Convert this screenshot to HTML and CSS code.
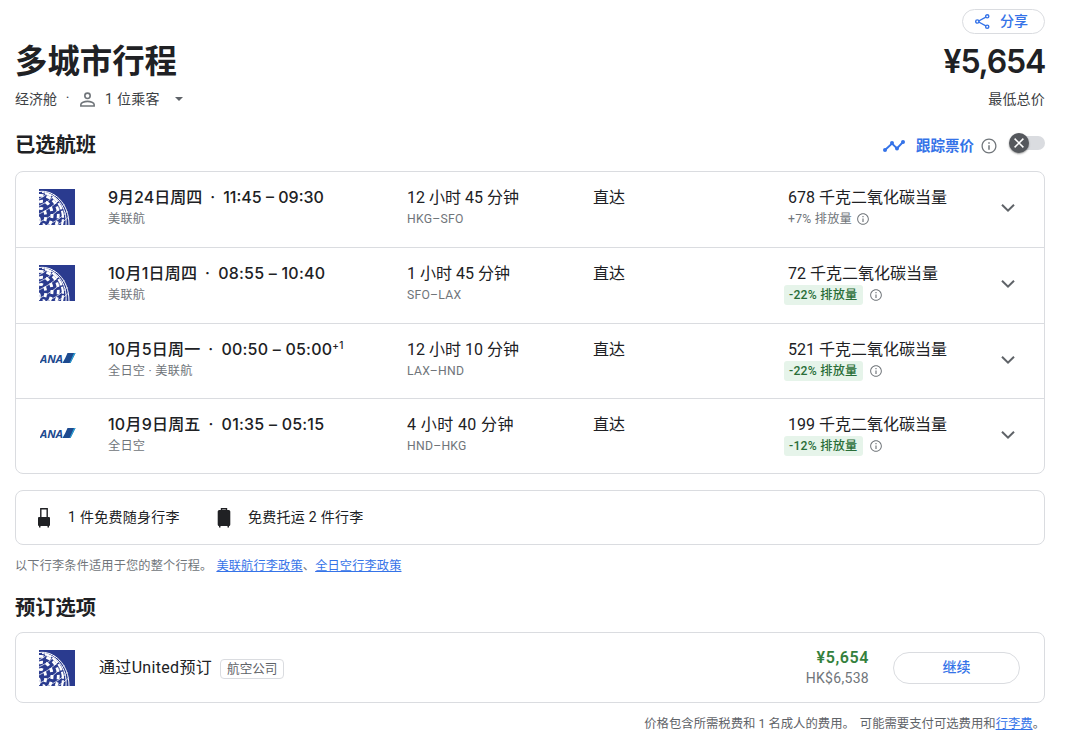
FILE: index.html
```
<!DOCTYPE html>
<html lang="zh-CN">
<head>
    <meta charset="UTF-8">
    <meta name="viewport" content="width=device-width, initial-scale=1.0">
    <title>多城市行程</title>
    <link rel="stylesheet" href="styles.css">
</head>
<body>
    <!-- Shared icons -->
    <svg class="sprite">
        <symbol id="united" viewBox="0 0 36 36">
            <rect width="36" height="36" fill="#2a3b8f"/>
            <!-- meridians -->
            <g fill="none" stroke="#fff">
                <path d="M0 2.500C15 .5 30 14 30 36" stroke-width="1"/>
                <path d="M3 3.500C17 4 28.500 18 27 36" stroke-width="1"/>
                <path d="M6 4C18 8 27 21 23 36" stroke-width="2.200" stroke-dasharray="7 1.500"/>
                <path d="M0 6.500C14 5 24 20 17 36" stroke-width="2.800" stroke-dasharray="4.500 3"/>
                <path d="M0 13C10 9 17 23 10.500 36" stroke-width="3" stroke-dasharray="4 3"/>
                <path d="M0 20C6 17 9 27 4.500 36" stroke-width="2.800" stroke-dasharray="4 2.500"/>
                <path d="M0 28Q2 30 0 35" stroke-width="1.600"/>
            </g>
            <!-- parallels -->
            <path d="M0 10Q5 8 9 3.500M0 17Q10 13 16 6M0 25Q13 19 21 10M1 33Q17 25 25.500 15M8 36Q21 31 28.500 22M18 36Q25 33 29.500 28" fill="none" stroke="#fff" stroke-width=".7"/>
        </symbol>
        <symbol id="ana" viewBox="0 0 36 12">
            <text class="ana-text" x="0" y="10.500" textLength="23" lengthAdjust="spacingAndGlyphs">ANA</text>
            <path d="M27.500 1H35.500L30.500 11H22.500Q25.500 6 27.500 1Z" fill="#1d4a8f"/>
            <path d="M34 1H35.500L30.500 11H29.500Z" fill="#2ba5d8"/>
        </symbol>
        <symbol id="info" viewBox="0 0 24 24">
            <path d="M11 7h2v2h-2zm0 4h2v6h-2zm1-9C6.480 2 2 6.480 2 12s4.480 10 10 10 10-4.480 10-10S17.520 2 12 2zm0 18.300c-4.580 0-8.300-3.720-8.300-8.300S7.420 3.700 12 3.700s8.300 3.720 8.300 8.300-3.720 8.300-8.300 8.300z"/>
        </symbol>
        <symbol id="chevron" viewBox="0 0 24 24">
            <path d="M6.700 8.100L12 13.200l5.300-5.100L18.700 9.500 12 16.100 5.300 9.500z"/>
        </symbol>
    </svg>

    <main class="page">
        <div class="share-bar">
            <button class="share-btn">
                <svg class="share-icon" viewBox="0 0 18 18"><g fill="none" stroke="currentColor" stroke-width="1.500"><path d="M4 9L14 3.500M4 9L14 14.500"/><circle cx="3.500" cy="9" r="1.700" fill="#fff"/><circle cx="14" cy="3.500" r="1.700" fill="#fff"/><circle cx="14" cy="14.500" r="1.700" fill="#fff"/></g></svg>
                <span>分享</span>
            </button>
        </div>

        <header class="trip-title">
            <h1>多城市行程</h1>
            <div class="total-price">¥5,654</div>
        </header>
        <div class="trip-meta">
            <span>经济舱</span>
            <span class="meta-dot">·</span>
            <svg class="person-icon" viewBox="0 0 14 14"><g fill="none" stroke="#70757a" stroke-width="1.500"><circle cx="7" cy="3.500" r="2.500"/><path d="M.8 13V11.700C.8 9.800 4.200 8.700 7 8.700s6.200 1.100 6.200 3V13z"/></g></svg>
            <span class="passengers">1 位乘客</span>
            <svg class="caret" viewBox="0 0 8 4"><path d="M0 0h8L4 4z" fill="#5f6368"/></svg>
            <span class="lowest">最低总价</span>
        </div>

        <div class="section-head">
            <h2>已选航班</h2>
            <div class="track">
                <svg class="track-icon" viewBox="0 0 22 12"><path d="M2 10L9 3.500l5 5L20 2" fill="none" stroke="currentColor" stroke-width="1.900"/><g fill="currentColor"><circle cx="2" cy="10" r="2"/><circle cx="9" cy="3" r="2"/><circle cx="14" cy="8.500" r="2"/><circle cx="20" cy="2" r="2"/></g></svg>
                <span class="track-label">跟踪票价</span>
                <svg class="info info-lg"><use href="#info"/></svg>
                <div class="switch">
                    <span class="knob"><svg viewBox="0 0 10 10"><path d="M.6.6l8.800 8.800M9.400.6L.6 9.400" stroke="#fff" stroke-width="1.500"/></svg></span>
                </div>
            </div>
        </div>

        <section class="card flights">
            <div class="flight">
                <svg class="logo"><use href="#united"/></svg>
                <div class="when">
                    <div class="main strong"><span>9月24日周四</span><span class="sep">·</span><span>11:45 – 09:30</span></div>
                    <div class="sub">美联航</div>
                </div>
                <div class="duration"><div class="main">12 小时 45 分钟</div><div class="sub">HKG–SFO</div></div>
                <div class="main stops">直达</div>
                <div class="emissions">
                    <div class="main">678 千克二氧化碳当量</div>
                    <div class="sub emission-line"><span>+7% 排放量</span><svg class="info"><use href="#info"/></svg></div>
                </div>
                <svg class="chevron"><use href="#chevron"/></svg>
            </div>
            <div class="flight">
                <svg class="logo"><use href="#united"/></svg>
                <div class="when">
                    <div class="main strong wide"><span>10月1日周四</span><span class="sep">·</span><span>08:55 – 10:40</span></div>
                    <div class="sub">美联航</div>
                </div>
                <div class="duration"><div class="main">1 小时 45 分钟</div><div class="sub">SFO–LAX</div></div>
                <div class="main stops">直达</div>
                <div class="emissions">
                    <div class="main">72 千克二氧化碳当量</div>
                    <div class="sub emission-line"><span class="badge">-22% 排放量</span><svg class="info"><use href="#info"/></svg></div>
                </div>
                <svg class="chevron"><use href="#chevron"/></svg>
            </div>
            <div class="flight">
                <svg class="logo logo-ana"><use href="#ana"/></svg>
                <div class="when">
                    <div class="main strong wide"><span>10月5日周一</span><span class="sep">·</span><span>00:50 – 05:00</span><sup>+1</sup></div>
                    <div class="sub">全日空 · 美联航</div>
                </div>
                <div class="duration"><div class="main">12 小时 10 分钟</div><div class="sub">LAX–HND</div></div>
                <div class="main stops">直达</div>
                <div class="emissions">
                    <div class="main">521 千克二氧化碳当量</div>
                    <div class="sub emission-line"><span class="badge">-22% 排放量</span><svg class="info"><use href="#info"/></svg></div>
                </div>
                <svg class="chevron"><use href="#chevron"/></svg>
            </div>
            <div class="flight">
                <svg class="logo logo-ana"><use href="#ana"/></svg>
                <div class="when">
                    <div class="main strong wide"><span>10月9日周五</span><span class="sep">·</span><span>01:35 – 05:15</span></div>
                    <div class="sub">全日空</div>
                </div>
                <div class="duration"><div class="main wide">4 小时 40 分钟</div><div class="sub">HND–HKG</div></div>
                <div class="main stops">直达</div>
                <div class="emissions">
                    <div class="main">199 千克二氧化碳当量</div>
                    <div class="sub emission-line"><span class="badge">-12% 排放量</span><svg class="info"><use href="#info"/></svg></div>
                </div>
                <svg class="chevron"><use href="#chevron"/></svg>
            </div>
        </section>

        <section class="card bags">
            <svg class="bag-icon" viewBox="0 0 14 22"><path d="M3.800 11V1.700h6.400V11" fill="none" stroke="#202124" stroke-width="1.400"/><path d="M2 10h10q1 0 1 1v7q0 1-1 1v1.500h-1.500V19h-7v1.500H2V19q-1 0-1-1v-7q0-1 1-1z" fill="#202124"/></svg>
            <span class="carry-on">1 件免费随身行李</span>
            <svg class="bag-icon" viewBox="0 0 14 22"><path d="M4.500 4V1.700h5V4" fill="none" stroke="#202124" stroke-width="1.400"/><path d="M2.300 3h9.400Q13.300 3 13.300 4.600v12.800q0 1.600-1.300 1.600v1.500h-1.500V19h-7v1.500H2V19Q.7 19 .7 17.400V4.600Q.7 3 2.300 3z" fill="#202124"/></svg>
            <span class="checked">免费托运 2 件行李</span>
        </section>
        <p class="bag-note"><span>以下行李条件适用于您的整个行程。</span><a href="#">美联航行李政策</a>、<a href="#">全日空行李政策</a></p>

        <h2 class="booking-head">预订选项</h2>
        <section class="card booking">
            <svg class="logo"><use href="#united"/></svg>
            <div class="vendor">通过United预订</div>
            <span class="tag">航空公司</span>
            <div class="price">
                <div class="price-main">¥5,654</div>
                <div class="price-local">HK$6,538</div>
            </div>
            <button class="continue-btn">继续</button>
        </section>
        <p class="fees"><span>价格包含所需税费和 1 名成人的费用。</span><span>可能需要支付可选费用和<a href="#">行李费</a>。</span></p>
    </main>
</body>
</html>
```

FILE: styles.css
```
:root {
    --text: #202124;
    --muted: #70757a;
    --blue: #3573e8;
    --line: #dadce0;
}

* {
    box-sizing: border-box;
    margin: 0;
    padding: 0;
}

body {
    font-family: Roboto, "Noto Sans CJK SC", sans-serif;
    color: var(--text);
    background: #fff;
}

.sprite {
    display: none;
}

.page {
    width: 1030px;
    margin-left: 15px;
    padding-top: 9px;
}

svg {
    display: block;
    flex: none;
}

h1, h2 {
    font-weight: 700;
}

a {
    color: var(--blue);
    text-decoration: underline;
}

button {
    font-family: inherit;
    background: #fff;
    border: 1px solid var(--line);
    color: var(--blue);
    font-weight: 500;
}

.share-bar {
    display: flex;
    justify-content: flex-end;
    height: 25px;
}

.share-btn {
    display: flex;
    align-items: center;
    gap: 9px;
    width: 83px;
    height: 25px;
    padding: 0 0 3px 11px;
    border-radius: 13px;
    font-size: 14px;
}

.share-icon {
    width: 17px;
    height: 17px;
    margin-top: 3px;
}

.trip-title {
    display: flex;
    justify-content: space-between;
    align-items: center;
    height: 54px;
}

h1 {
    margin-top: -6px;
    font-size: 32.400px;
}

.total-price {
    font-family: Inter, Roboto, sans-serif;
    font-weight: 600;
    font-size: 32px;
    letter-spacing: -1.200px;
}

.trip-meta {
    display: flex;
    align-items: center;
    height: 22px;
    padding-bottom: 2px;
    font-size: 14px;
    color: #3c4043;
}

.meta-dot {
    width: 21px;
    text-align: center;
}

.person-icon {
    width: 15px;
    height: 15px;
    margin: 3px 10px 0 2px;
}

.passengers {
    letter-spacing: 0.300px;
}

.caret {
    width: 8px;
    height: 4px;
    margin: 2px 0 0 15px;
}

.lowest {
    margin-left: auto;
    letter-spacing: 0.200px;
}

.section-head {
    display: flex;
    justify-content: space-between;
    align-items: center;
    height: 61px;
    padding-top: 9px;
}

h2 {
    font-size: 20.300px;
    line-height: 28px;
}

.track {
    display: flex;
    align-items: center;
    color: var(--blue);
}

.track-icon {
    width: 22px;
    height: 12px;
    margin-top: 1px;
}

.track-label {
    margin: -2px 6px 0 11px;
    font-size: 14.500px;
    font-weight: 700;
}

.info {
    width: 14px;
    height: 14px;
    fill: var(--muted);
}

.info-lg {
    width: 18px;
    height: 18px;
    margin-top: 1px;
}

.switch {
    width: 34px;
    height: 14px;
    margin: -4px 0 0 13px;
    border-radius: 7px;
    background: var(--line);
}

.knob {
    display: flex;
    align-items: center;
    justify-content: center;
    width: 20px;
    height: 20px;
    margin: -3px 0 0 -2px;
    border-radius: 50%;
    background: #55585d;
    box-shadow: 0 1px 2px rgba(0, 0, 0, 0.4);
}

.knob svg {
    width: 10px;
    height: 10px;
}

.card {
    border: 1px solid var(--line);
    border-radius: 8px;
}

.flights {
    height: 303px;
    display: grid;
    grid-template-rows: repeat(4, 1fr);
}

.flight {
    display: grid;
    grid-template-columns: 68px 299px 186px 195px 208px 24px;
    padding: 14px 0 0 24px;
}

.flight + .flight {
    border-top: 1px solid var(--line);
}

.logo {
    width: 36px;
    height: 36px;
    margin: 3px 0 0 -1px;
}

.logo-ana {
    height: 12px;
    margin: 14px 0 0;
}

.ana-text {
    font: italic 700 11px "Open Sans", sans-serif;
    fill: #1d4a8f;
}

.main {
    font-size: 16px;
    line-height: 24px;
    white-space: nowrap;
}

.strong {
    display: flex;
    height: 24px;
    font-family: Inter, "Noto Sans CJK SC", sans-serif;
    font-weight: 500;
    line-height: 23px;
}

.wide {
    letter-spacing: 0.220px;
}

.duration .wide {
    letter-spacing: 0.400px;
}

.sep {
    width: 21px;
    text-align: center;
}

.main sup {
    font-size: 10px;
    line-height: 14px;
}

.sub {
    color: var(--muted);
    font-size: 12.200px;
    line-height: 18px;
    letter-spacing: 0.250px;
    white-space: nowrap;
}

.emission-line {
    display: flex;
    align-items: center;
    gap: 4px;
    height: 18px;
}

.badge {
    margin-left: -4px;
    padding: 0 5px;
    line-height: 20px;
    border-radius: 3px;
    background: #e6f4ea;
    color: #2a6e38;
    font-weight: 500;
}

.badge + .info {
    margin-left: 2px;
}

.chevron {
    width: 24px;
    height: 24px;
    margin-top: 10px;
    fill: #5f6368;
}

.bags {
    display: flex;
    align-items: center;
    height: 55px;
    margin-top: 16px;
    padding-left: 21px;
    font-size: 14px;
    letter-spacing: 0.280px;
}

.bag-icon {
    width: 14px;
    height: 22px;
    margin-right: 17px;
}

.carry-on,
.checked {
    margin-top: -3px;
}

.carry-on {
    margin-right: 37px;
}

.bag-note {
    height: 40px;
    font-size: 12.200px;
    line-height: 42px;
    letter-spacing: 0.150px;
    color: var(--muted);
}

.bag-note span {
    margin-right: 4px;
}

.booking-head {
    height: 47px;
    line-height: 47px;
}

.booking {
    display: flex;
    align-items: center;
    height: 71px;
    padding: 0 24px;
}

.booking .logo {
    margin-top: 0;
}

.vendor {
    margin: -3px 8px 0 24px;
    font-size: 16px;
    letter-spacing: 0.320px;
}

.tag {
    height: 20px;
    margin-top: 2px;
    padding: 0 6px;
    border: 1px solid var(--line);
    border-radius: 4px;
    color: #5f6368;
    font-size: 12.600px;
    line-height: 18px;
}

.price {
    margin: 0 24px 0 auto;
    text-align: right;
}

.price-main {
    color: #34813c;
    font-size: 16px;
    font-weight: 600;
    line-height: 20px;
    letter-spacing: 0.600px;
}

.price-local {
    color: var(--muted);
    font-size: 14px;
    line-height: 20px;
    letter-spacing: 0.300px;
}

.continue-btn {
    width: 127px;
    height: 32px;
    padding-bottom: 3px;
    border-radius: 16px;
    font-size: 14px;
}

.fees {
    display: flex;
    justify-content: flex-end;
    gap: 5px;
    height: 34px;
    padding-top: 1px;
    color: #5f6368;
    font-size: 12.350px;
    line-height: 40px;
}
```
